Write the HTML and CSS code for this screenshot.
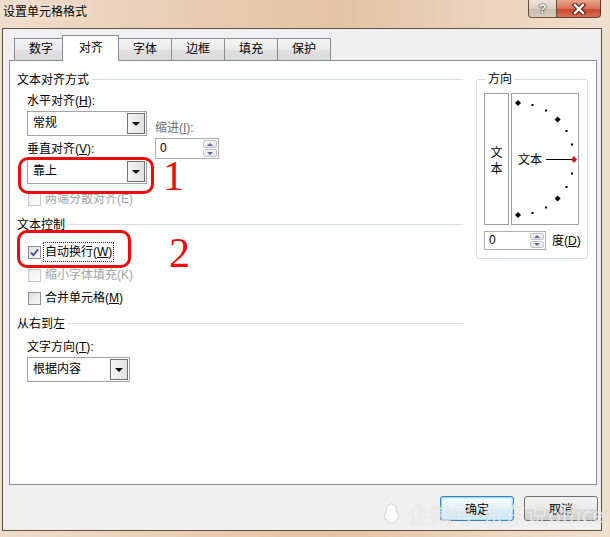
FILE: index.html
```html
<!DOCTYPE html>
<html>
<head>
  <meta charset="utf-8">
  <title>设置单元格格式</title>
  <link rel="stylesheet" href="styles.css">
</head>
<body>
  <div class="window">
    <div class="titlebar">
      <span class="title">设置单元格格式</span>
      <div class="caption">
        <span class="cap-btn help">?</span>
        <span class="cap-btn close">
          <svg width="16" height="12" viewBox="0 0 16 12">
            <path d="M4 2 L12 10 M12 2 L4 10" stroke="#5b2418" stroke-width="4.6" stroke-linecap="square" fill="none"/>
            <path d="M4 2 L12 10 M12 2 L4 10" stroke="#fff" stroke-width="2.4" stroke-linecap="square" fill="none"/>
          </svg>
        </span>
      </div>
    </div>

    <div class="client">
      <div class="tabs">
        <span class="tab">数字</span>
        <span class="tab active">对齐</span>
        <span class="tab">字体</span>
        <span class="tab">边框</span>
        <span class="tab">填充</span>
        <span class="tab">保护</span>
      </div>

      <div class="panel">
        <div class="left">
          <div class="section-title">文本对齐方式</div>
          <div class="align-grid">
            <div class="col">
              <div class="label">水平对齐(<u>H</u>):</div>
              <div class="combo"><span class="val">常规</span><span class="drop"></span></div>
              <div class="label">垂直对齐(<u>V</u>):</div>
              <div class="combo"><span class="val">靠上</span><span class="drop"></span></div>
            </div>
            <div class="indent">
              <div class="label muted-label">缩进(<u>I</u>):</div>
              <div class="spin"><span class="val">0</span><span class="spin-btns"><i class="up"></i><i class="down"></i></span></div>
            </div>
          </div>
          <div class="check disabled"><span class="box"></span><span>两端分散对齐(E)</span></div>

          <div class="section-title">文本控制</div>
          <div class="check first-check">
            <span class="box">
              <svg width="11" height="11" viewBox="0 0 11 11"><path d="M2 5.6 L4.4 8.2 L9 2.4" stroke="#44528a" stroke-width="1.8" fill="none"/></svg>
            </span>
            <span class="focus">自动换行(<u>W</u>)</span>
          </div>
          <div class="check disabled"><span class="box"></span><span>缩小字体填充(K)</span></div>
          <div class="check"><span class="box"></span><span>合并单元格(<u>M</u>)</span></div>

          <div class="section-title">从右到左</div>
          <div class="label text-dir">文字方向(<u>T</u>):</div>
          <div class="combo narrow"><span class="val">根据内容</span><span class="drop"></span></div>
        </div>

        <fieldset class="orient">
          <legend>方向</legend>
          <div class="orient-boxes">
            <div class="vertical-text">文<br>本</div>
            <div class="dial">
              <svg width="66" height="130" viewBox="0 0 66 130">
                <polygon points="6,6 9,9 6,12 3,9" fill="#000"/>
                <rect x="19.5" y="10" width="2" height="2" fill="#000"/>
                <rect x="33" y="15.5" width="2" height="2" fill="#000"/>
                <polygon points="45.6,22.4 48.6,25.4 45.6,28.4 42.6,25.4" fill="#000"/>
                <rect x="53.5" y="36" width="2" height="2" fill="#000"/>
                <rect x="59" y="49.5" width="2" height="2" fill="#000"/>
                <rect x="59" y="78.5" width="2" height="2" fill="#000"/>
                <rect x="53.5" y="92" width="2" height="2" fill="#000"/>
                <polygon points="45.6,101.6 48.6,104.6 45.6,107.6 42.6,104.6" fill="#000"/>
                <rect x="33" y="112.5" width="2" height="2" fill="#000"/>
                <rect x="19.5" y="118" width="2" height="2" fill="#000"/>
                <polygon points="6,118 9,121 6,124 3,121" fill="#000"/>
                <line x1="34" y1="65.5" x2="60" y2="65.5" stroke="#000" stroke-width="1"/>
                <polygon points="62,62 65,65.5 62,69 59,65.5" fill="#d4101c"/>
                <text x="6" y="70" class="dial-text">文本</text>
              </svg>
            </div>
          </div>
          <div class="degree-row">
            <div class="spin small"><span class="val">0</span><span class="spin-btns"><i class="up"></i><i class="down"></i></span></div>
            <span class="degree-label">度(<u>D</u>)</span>
          </div>
        </fieldset>

        <div class="mark mark-one"></div>
        <div class="mark mark-two"></div>
        <span class="num num-one">1</span>
        <span class="num num-two">2</span>
      </div>

      <div class="actions">
        <button class="btn default">确定</button>
        <button class="btn">取消</button>
      </div>
    </div>

    <div class="watermark">
      <svg width="17" height="21" viewBox="0 0 17 21">
        <path d="M8.5 1 C4.5 1 3.5 4.5 3.5 7.5 C3.5 9 2 11 1.5 13.5 C1 16 2 17 3 16 C3.5 18.5 5.5 20 8.5 20 C11.5 20 13.5 18.5 14 16 C15 17 16 16 15.5 13.5 C15 11 13.5 9 13.5 7.5 C13.5 4.5 12.5 1 8.5 1 Z" fill="rgba(255,255,255,0.7)" stroke="rgba(160,160,160,0.5)" stroke-width="0.8"/>
      </svg>
      <span>企鹅号</span>
      <span>东东说office</span>
    </div>
  </div>
</body>
</html>
```

FILE: styles.css
```css
body {
  margin: 0;
  font-family: "Liberation Sans", "Noto Sans CJK SC", sans-serif;
  font-size: 12px;
  line-height: 16px;
  color: #000;
}
.window {
  position: relative;
  width: 610px;
  height: 537px;
  overflow: hidden;
  display: flex;
  flex-direction: column;
  background: linear-gradient(90deg, #efdcca 0%, #e8cbb0 35%, #e3c3a4 55%, #ecd4bd 80%, #f1dfce 100%);
}
.titlebar {
  height: 28px;
  flex-shrink: 0;
  display: flex;
  justify-content: space-between;
  align-items: flex-start;
}
.title {
  margin: 4px 0 0 3px;
  text-shadow: 0 0 6px rgba(255, 255, 255, 0.9);
}
.caption {
  display: flex;
  margin-right: 9px;
}
.cap-btn {
  height: 18px;
  box-sizing: border-box;
  display: flex;
  align-items: center;
  justify-content: center;
  border: 1px solid rgba(70, 45, 30, 0.8);
  border-top: 0;
}
.help {
  width: 29px;
  border-radius: 0 0 0 4px;
  background: linear-gradient(#eee4da, #dccfc3 50%, #cbbbac 51%, #d9cbbd);
  color: #fff;
  font-weight: bold;
  font-size: 13px;
  text-shadow: 0 0 1px #333, 0 0 1px #333, 0 0 2px #555;
}
.close {
  width: 44px;
  border-left: 0;
  border-radius: 0 0 4px 0;
  background: linear-gradient(#e8a48c, #d97258 50%, #c8452a 51%, #d76f55);
}

.client {
  flex: 1;
  margin: 0 8px 6px 2px;
  border: 1px solid #5d5045;
  background: #f0f0f0;
  display: flex;
  flex-direction: column;
}
.tabs {
  display: flex;
  align-items: flex-end;
  height: 31px;
  flex-shrink: 0;
  padding-left: 11px;
}
.tab {
  height: 22px;
  box-sizing: border-box;
  padding: 0 14px;
  border: 1px solid #898c95;
  border-bottom: 0;
  margin-left: -1px;
  line-height: 21px;
  background: linear-gradient(#f4f4f4, #eaeaea 50%, #e1e1e1 51%, #dadada);
}
.tab:first-child {
  margin-left: 0;
}
.tab.active {
  position: relative;
  z-index: 1;
  height: 26px;
  margin: 0 0 -1px -6px;
  padding: 0 15px 0 16px;
  line-height: 24px;
  background: #fff;
}

.panel {
  position: relative;
  height: 425px;
  box-sizing: border-box;
  margin: 0 4px 0 6px;
  border: 1px solid #898c95;
  background: #fff;
  display: flex;
  align-items: flex-start;
}
.left {
  flex: 1;
  padding: 0 4px 0 7px;
}
.section-title {
  display: flex;
  align-items: center;
  gap: 3px;
  margin-top: 10px;
}
.section-title:first-child {
  margin-top: 11px;
}
.section-title::after {
  content: "";
  flex: 1;
  margin-top: -2px;
  border-top: 1px solid #d5dfe5;
}
.align-grid {
  display: grid;
  grid-template-columns: 120px 64px;
  column-gap: 8px;
  margin: 5px 0 0 10px;
}
.label + .combo {
  margin-top: 2px;
}
.combo + .label {
  margin-top: 5px;
}
.indent {
  padding-top: 27px;
}
.muted-label {
  color: #6d6d6d;
}
.indent .spin {
  margin-top: 2px;
}

.combo {
  display: flex;
  height: 25px;
  box-sizing: border-box;
  border: 1px solid #a3a3a3;
  background: #fff;
}
.combo .val {
  flex: 1;
  padding-left: 5px;
  line-height: 23px;
}
.drop {
  width: 18px;
  box-sizing: border-box;
  margin: 1px;
  border: 1px solid #707070;
  background: linear-gradient(90deg, #f4f4f4, #e2e2e2);
  display: flex;
  align-items: center;
  justify-content: center;
}
.drop::after {
  content: "";
  border-left: 4px solid transparent;
  border-right: 4px solid transparent;
  border-top: 4px solid #000;
}
.combo.narrow {
  width: 103px;
  margin-left: 10px;
}

.spin {
  display: flex;
  height: 21px;
  box-sizing: border-box;
  border: 1px solid #abadb3;
  background: #fff;
}
.spin .val {
  flex: 1;
  padding-left: 4px;
  line-height: 19px;
}
.spin-btns {
  width: 14px;
  margin: 1px;
  display: flex;
  flex-direction: column;
  gap: 1px;
}
.spin-btns i {
  flex: 1;
  border: 1px solid #c3c3c3;
  border-radius: 2px;
  background: linear-gradient(#f6f6f6, #e4e4e4);
  display: flex;
  align-items: center;
  justify-content: center;
}
.spin-btns .up::after {
  content: "";
  border-left: 3px solid transparent;
  border-right: 3px solid transparent;
  border-bottom: 3px solid #5a6c90;
}
.spin-btns .down::after {
  content: "";
  border-left: 3px solid transparent;
  border-right: 3px solid transparent;
  border-top: 3px solid #5a6c90;
}

.check {
  display: flex;
  align-items: center;
  gap: 4px;
  height: 16px;
  margin: 7px 0 0 11px;
}
.check.first-check {
  margin-top: 11px;
}
.box {
  width: 13px;
  height: 13px;
  box-sizing: border-box;
  border: 1px solid #8e8f8f;
  background: linear-gradient(135deg, #dedede, #f8f8f8);
  display: flex;
  align-items: center;
  justify-content: center;
}
.check.disabled {
  color: #a3a3a3;
}
.check.disabled .box {
  border-color: #c8c8c8;
  background: linear-gradient(135deg, #f0f0f0, #fbfbfb);
}
.focus {
  outline: 1px dotted #333;
  outline-offset: 1px;
}
.text-dir {
  margin: 7px 0 0 10px;
}

.orient {
  width: 112px;
  box-sizing: border-box;
  margin: 10px 8px 0 9px;
  padding: 0 5px 8px 7px;
  border: 1px solid #d5dfe5;
  border-radius: 3px;
  min-width: 0;
}
.orient legend {
  padding: 0 2px;
  margin-left: 2px;
  line-height: 16px;
}
.orient-boxes {
  display: flex;
  gap: 2px;
  margin-top: 6px;
}
.vertical-text {
  width: 25px;
  height: 132px;
  box-sizing: border-box;
  border: 1px solid #a0a0a0;
  display: flex;
  align-items: center;
  justify-content: center;
  text-align: center;
  padding-top: 3px;
}
.dial {
  width: 68px;
  height: 132px;
  box-sizing: border-box;
  border: 1px solid #a0a0a0;
}
.dial svg {
  display: block;
}
.dial-text {
  font-family: "Noto Sans CJK SC", sans-serif;
  font-size: 12px;
}
.degree-row {
  display: flex;
  align-items: center;
  gap: 6px;
  margin-top: 6px;
}
.degree-label {
  white-space: nowrap;
}
.spin.small {
  width: 62px;
  height: 19px;
  flex-shrink: 0;
}
.spin.small .val {
  line-height: 17px;
}

.mark {
  position: absolute;
  box-sizing: border-box;
  border: 3px solid #f00a0a;
  border-radius: 10px;
}
.mark-one {
  left: 8px;
  top: 96px;
  width: 136px;
  height: 37px;
}
.mark-two {
  left: 7px;
  top: 169px;
  width: 114px;
  height: 38px;
}
.num {
  position: absolute;
  font-family: "Liberation Serif", serif;
  font-size: 42px;
  line-height: 42px;
  color: #f00a0a;
}
.num-one {
  left: 153px;
  top: 94px;
}
.num-two {
  left: 159px;
  top: 171px;
}

.actions {
  display: flex;
  justify-content: flex-end;
  gap: 10px;
  margin-top: 11px;
  padding-right: 3px;
}
.btn {
  width: 74px;
  height: 25px;
  border: 1px solid #707070;
  border-radius: 3px;
  font-family: "Liberation Sans", "Noto Sans CJK SC", sans-serif;
  font-size: 12px;
  color: #000;
  padding: 0;
  background: linear-gradient(#f2f2f2, #ebebeb 50%, #dddddd 51%, #cfcfcf);
}
.btn.default {
  border-color: #3c7fb1;
  box-shadow: inset 0 0 0 1px #9fdcf8, inset 0 0 0 2px #d6f0fc;
  background: linear-gradient(#f4fafd, #e9f5fc 50%, #dcf0fb 51%, #cfe8f7);
}

.watermark {
  position: absolute;
  left: 383px;
  top: 501px;
  display: flex;
  align-items: center;
  gap: 8px;
  font-family: "Noto Sans CJK SC", sans-serif;
  font-size: 22px;
  line-height: 24px;
  color: rgba(255, 255, 255, 0.7);
  text-shadow: 0 0 1px rgba(120, 120, 120, 0.35);
  pointer-events: none;
}
```
